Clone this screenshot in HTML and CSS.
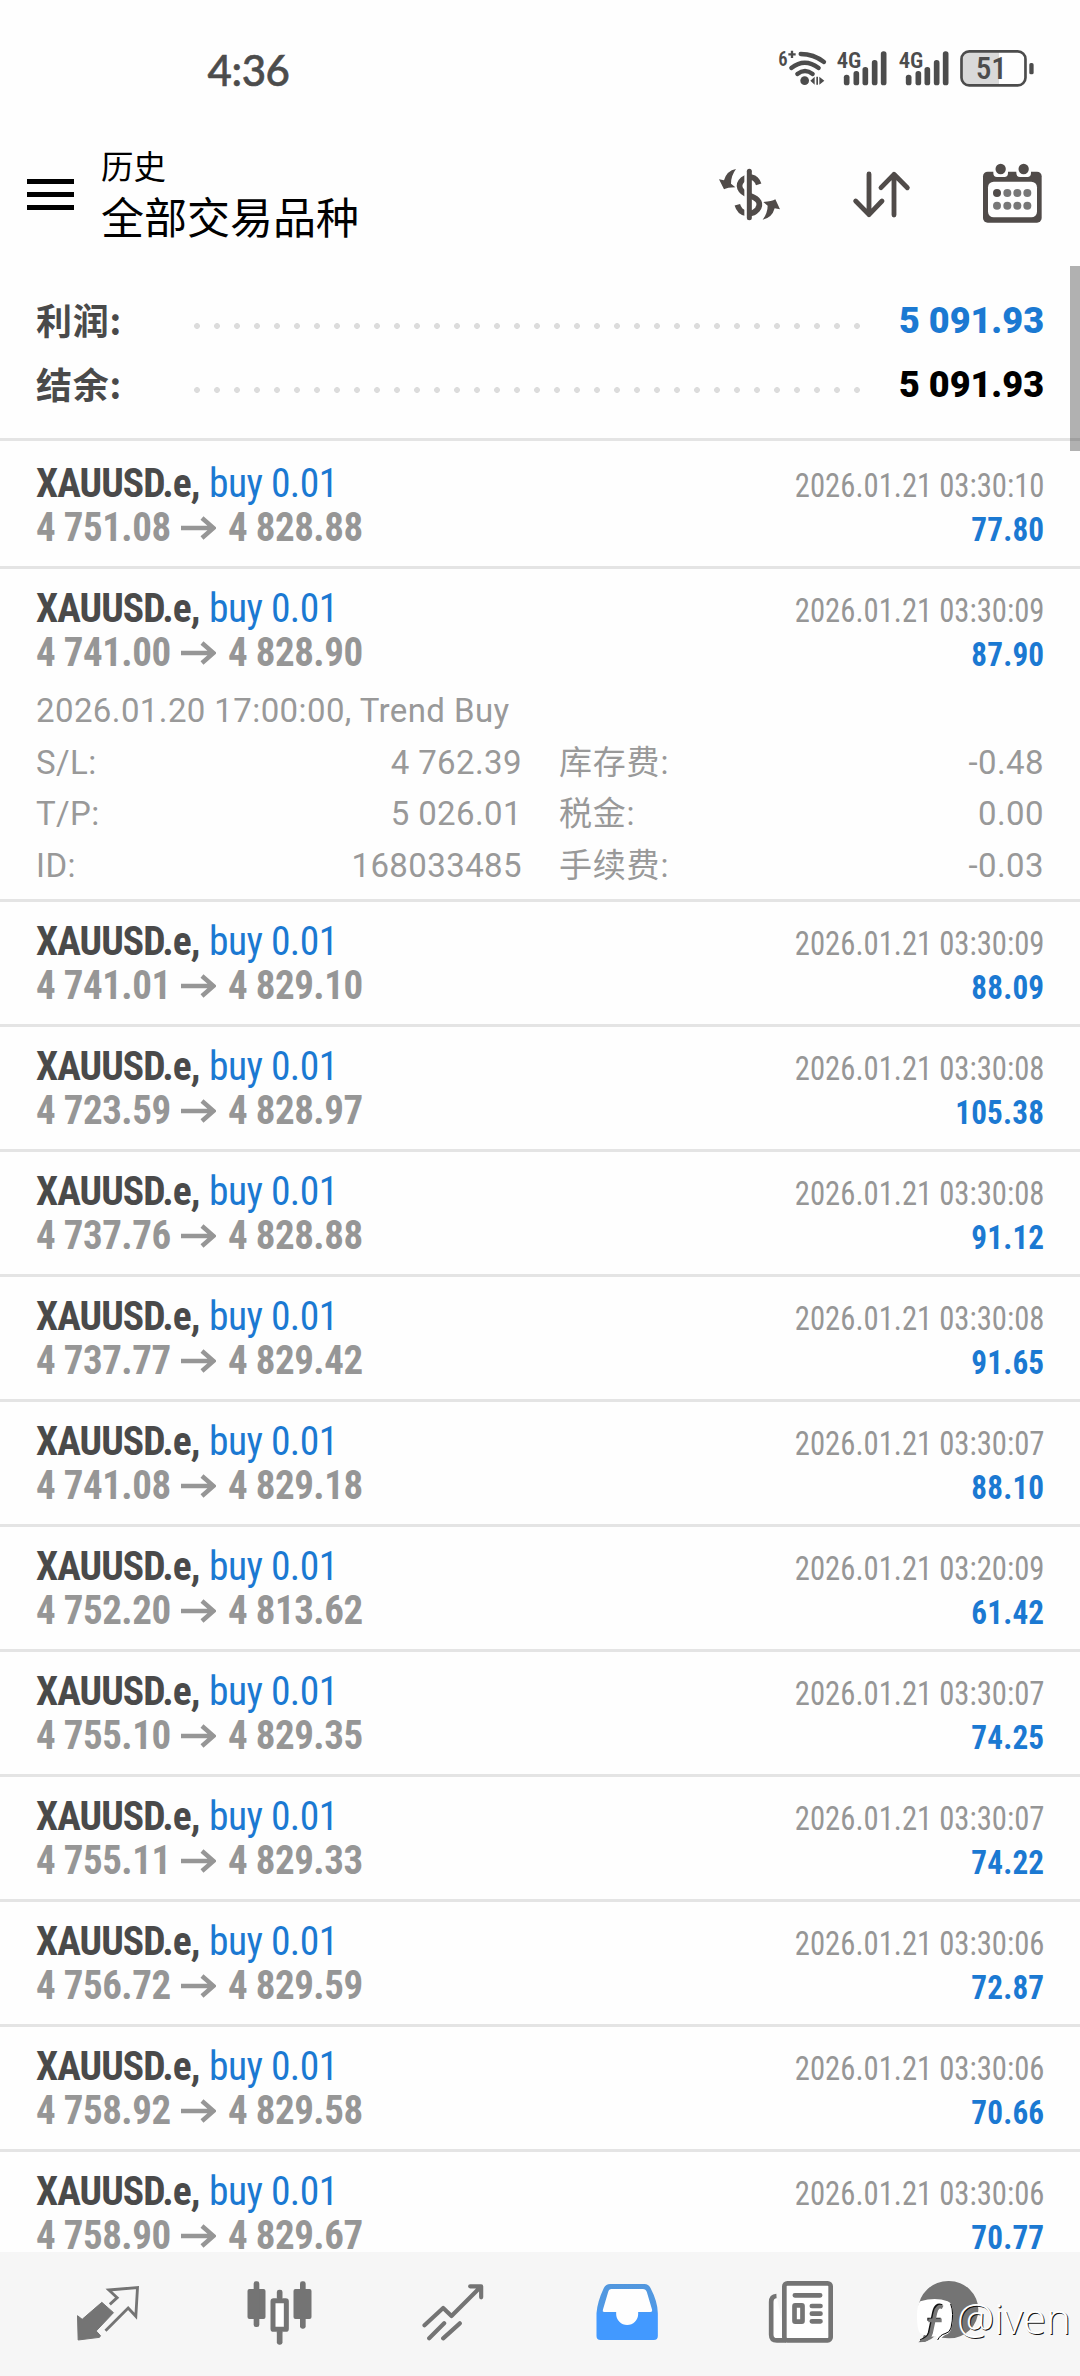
FILE: index.html
```html
<!DOCTYPE html>
<html lang="zh-CN">
<head>
<meta charset="utf-8">
<title>历史</title>
<link rel="stylesheet" href="styles.css">
</head>
<body>
<svg class="defs" width="0" height="0">
  <symbol id="arrow" viewBox="0 0 35 24"><path d="M0 12H32M21 2L32.500 12L21 22" fill="none" stroke="#969696" stroke-width="4.500"/></symbol>
</svg>
<div class="screen">
  <header class="status">
    <span class="clock">4:36</span>
    <div class="status-icons">
      <svg width="60" height="60" viewBox="10 0 180 180">
        <text x="23" y="79" font-size="62" font-weight="600" textLength="28" lengthAdjust="spacingAndGlyphs">6</text>
        <path d="M53 43H75M64 32V54" stroke="#4c4c4c" stroke-width="7"/>
        <g fill="none" stroke="#4c4c4c" stroke-width="13" stroke-linecap="round"><path d="M90 42Q129 42 160 66"/><path d="M62 84Q102 52 144 84"/><path d="M80 102Q103 84 126 102"/></g>
        <circle cx="102" cy="122" r="13"/><path d="M119 122L132 110V134ZM137 110H142V134H137ZM146 110L161 122L146 134Z"/>
      </svg>
      <svg width="61.670" height="60" viewBox="190 0 185 180">
        <text x="198" y="83" font-size="64" font-weight="600" textLength="74" lengthAdjust="spacingAndGlyphs">4G</text>
        <rect x="219.500" y="104" width="17" height="32" rx="8"/><rect x="248.500" y="93" width="17" height="43" rx="8"/><rect x="275.500" y="81" width="17" height="55" rx="8"/><rect x="303.500" y="60" width="17" height="76" rx="8"/><rect x="330.500" y="34" width="17" height="102" rx="8"/>
      </svg>
      <svg width="61.670" height="60" viewBox="190 0 185 180">
        <text x="198" y="83" font-size="64" font-weight="600" textLength="74" lengthAdjust="spacingAndGlyphs">4G</text>
        <rect x="219.500" y="104" width="17" height="32" rx="8"/><rect x="248.500" y="93" width="17" height="43" rx="8"/><rect x="275.500" y="81" width="17" height="55" rx="8"/><rect x="303.500" y="60" width="17" height="76" rx="8"/><rect x="330.500" y="34" width="17" height="102" rx="8"/>
      </svg>
      <svg width="83.300" height="60" viewBox="560 0 250 180">
        <path d="M596 34H686V135H596Q575 135 575 114V55Q575 34 596 34Z" fill="#d9d9d9"/>
        <rect x="573.500" y="34" width="192" height="102" rx="23" fill="none" stroke="#4c4c4c" stroke-width="8"/>
        <text x="616" y="118" font-size="92" font-weight="500" textLength="94" lengthAdjust="spacingAndGlyphs">51</text>
        <rect x="777" y="69" width="13" height="34" rx="5"/>
      </svg>
    </div>
  </header>
  <div class="toolbar">
    <div class="menu"><i></i><i></i><i></i></div>
    <div class="titles"><span class="sub">历史</span><h1>全部交易品种</h1></div>
    <div class="tools">
      <svg width="68" height="80" viewBox="18 0 204 240">
        <path d="M146 88C138 62 112 62 99 73C80 90 88 111 118 121C150 132 154 148 142 164C124 184 90 178 82 149" fill="none" stroke="#504b49" stroke-width="17"/>
        <path d="M107 40V200" stroke="#fdfdfd" stroke-width="8"/>
        <path d="M118 49V188" stroke="#504b49" stroke-width="15" stroke-linecap="round"/>
        <path d="M78 42Q50 47 42 76L27 73L42 103Q52 97 76 97L63 86Q63 62 78 42ZM158 194Q186 189 194 160L210 163L196 133Q186 139 160 141L173 152Q173 174 158 194Z"/>
      </svg>
      <svg width="64" height="80" viewBox="420 0 192 240"><path d="M477 57V179M437 138L477 179L516 138M552 180V58M513 98L552 58L592 98" fill="none" stroke="#504b49" stroke-width="14.500" stroke-linecap="round" stroke-linejoin="round"/></svg>
      <svg width="64" height="80" viewBox="810 0 192 240">
        <rect x="819" y="50" width="176" height="153" rx="14"/><rect x="834" y="80" width="147" height="107" rx="17" fill="#fefefe"/>
        <path d="M850 42V54Q850 66 861 66H883Q894 66 894 54V42ZM919 42V54Q919 66 930 66H952Q963 66 963 54V42Z" fill="#fefefe"/>
        <circle cx="872" cy="42" r="15.500"/><circle cx="941" cy="42" r="15.500"/><circle cx="861" cy="114" r="12"/>
        <g fill="#777"><circle cx="892" cy="114" r="12"/><circle cx="922" cy="114" r="12"/><circle cx="952" cy="114" r="12"/><circle cx="861" cy="152" r="12"/><circle cx="892" cy="152" r="12"/><circle cx="922" cy="152" r="12"/><circle cx="952" cy="152" r="12"/></g>
      </svg>
    </div>
  </div>
  <main class="list">
    <div class="scroll"></div>
    <section class="summary">
      <div class="sum"><span class="key">利润:</span><span class="dots"></span><b class="blue">5 091.93</b></div>
      <div class="sum"><span class="key">结余:</span><span class="dots"></span><b>5 091.93</b></div>
    </section>
    <article class="deal first"><div class="line"><b class="sym">XAUUSD.e,</b><span class="side">buy 0.01</span><time>2026.01.21 03:30:10</time></div><div class="line"><b class="price">4 751.08</b><svg class="to"><use href="#arrow"/></svg><b class="price">4 828.88</b><b class="profit">77.80</b></div></article>
    <article class="deal open"><div class="line"><b class="sym">XAUUSD.e,</b><span class="side">buy 0.01</span><time>2026.01.21 03:30:09</time></div><div class="line"><b class="price">4 741.00</b><svg class="to"><use href="#arrow"/></svg><b class="price">4 828.90</b><b class="profit">87.90</b></div>
      <div class="details">
        <p class="note">2026.01.20 17:00:00, Trend Buy</p>
        <div class="grid">
          <span>S/L:</span><span class="num">4 762.39</span><span class="cjk">库存费:</span><span class="num">-0.48</span>
          <span>T/P:</span><span class="num">5 026.01</span><span class="cjk">税金:</span><span class="num">0.00</span>
          <span>ID:</span><span class="num">168033485</span><span class="cjk">手续费:</span><span class="num">-0.03</span>
        </div>
      </div>
    </article>
    <article class="deal"><div class="line"><b class="sym">XAUUSD.e,</b><span class="side">buy 0.01</span><time>2026.01.21 03:30:09</time></div><div class="line"><b class="price">4 741.01</b><svg class="to"><use href="#arrow"/></svg><b class="price">4 829.10</b><b class="profit">88.09</b></div></article>
    <article class="deal"><div class="line"><b class="sym">XAUUSD.e,</b><span class="side">buy 0.01</span><time>2026.01.21 03:30:08</time></div><div class="line"><b class="price">4 723.59</b><svg class="to"><use href="#arrow"/></svg><b class="price">4 828.97</b><b class="profit">105.38</b></div></article>
    <article class="deal"><div class="line"><b class="sym">XAUUSD.e,</b><span class="side">buy 0.01</span><time>2026.01.21 03:30:08</time></div><div class="line"><b class="price">4 737.76</b><svg class="to"><use href="#arrow"/></svg><b class="price">4 828.88</b><b class="profit">91.12</b></div></article>
    <article class="deal"><div class="line"><b class="sym">XAUUSD.e,</b><span class="side">buy 0.01</span><time>2026.01.21 03:30:08</time></div><div class="line"><b class="price">4 737.77</b><svg class="to"><use href="#arrow"/></svg><b class="price">4 829.42</b><b class="profit">91.65</b></div></article>
    <article class="deal"><div class="line"><b class="sym">XAUUSD.e,</b><span class="side">buy 0.01</span><time>2026.01.21 03:30:07</time></div><div class="line"><b class="price">4 741.08</b><svg class="to"><use href="#arrow"/></svg><b class="price">4 829.18</b><b class="profit">88.10</b></div></article>
    <article class="deal"><div class="line"><b class="sym">XAUUSD.e,</b><span class="side">buy 0.01</span><time>2026.01.21 03:20:09</time></div><div class="line"><b class="price">4 752.20</b><svg class="to"><use href="#arrow"/></svg><b class="price">4 813.62</b><b class="profit">61.42</b></div></article>
    <article class="deal"><div class="line"><b class="sym">XAUUSD.e,</b><span class="side">buy 0.01</span><time>2026.01.21 03:30:07</time></div><div class="line"><b class="price">4 755.10</b><svg class="to"><use href="#arrow"/></svg><b class="price">4 829.35</b><b class="profit">74.25</b></div></article>
    <article class="deal"><div class="line"><b class="sym">XAUUSD.e,</b><span class="side">buy 0.01</span><time>2026.01.21 03:30:07</time></div><div class="line"><b class="price">4 755.11</b><svg class="to"><use href="#arrow"/></svg><b class="price">4 829.33</b><b class="profit">74.22</b></div></article>
    <article class="deal"><div class="line"><b class="sym">XAUUSD.e,</b><span class="side">buy 0.01</span><time>2026.01.21 03:30:06</time></div><div class="line"><b class="price">4 756.72</b><svg class="to"><use href="#arrow"/></svg><b class="price">4 829.59</b><b class="profit">72.87</b></div></article>
    <article class="deal"><div class="line"><b class="sym">XAUUSD.e,</b><span class="side">buy 0.01</span><time>2026.01.21 03:30:06</time></div><div class="line"><b class="price">4 758.92</b><svg class="to"><use href="#arrow"/></svg><b class="price">4 829.58</b><b class="profit">70.66</b></div></article>
    <article class="deal"><div class="line"><b class="sym">XAUUSD.e,</b><span class="side">buy 0.01</span><time>2026.01.21 03:30:06</time></div><div class="line"><b class="price">4 758.90</b><svg class="to"><use href="#arrow"/></svg><b class="price">4 829.67</b><b class="profit">70.77</b></div></article>
  </main>
  <nav class="tabs">
    <svg viewBox="32.500 0 210 270"><path d="M52 137L66 148L125 97L160 128L108 183L121 197L118 202L54 210Z" stroke="#747474" stroke-width="3" stroke-linejoin="round"/><path d="M149 103L171 83L146 60L232 53L227 139L204 114L136 182" fill="none" stroke="#747474" stroke-width="8.500"/></svg>
    <svg viewBox="553.500 0 210 270"><rect x="564" y="57" width="54" height="90" rx="6"/><rect x="582.500" y="34" width="17" height="137" rx="7"/><rect x="702" y="57" width="54" height="90" rx="6"/><rect x="721.500" y="34" width="17" height="142" rx="7"/><rect x="652" y="59" width="17" height="30" rx="7"/><rect x="652" y="180" width="17" height="44" rx="7"/><rect x="640.500" y="92" width="40" height="86" rx="2" fill="#fefefe" stroke="#747474" stroke-width="15"/></svg>
    <svg viewBox="1074.500 0 210 270"><path d="M1094 166L1150 114L1175 138L1262 51M1231 49H1264V82M1108 205L1153 160M1150 205L1200 160" fill="none" stroke="#747474" stroke-width="12.500" stroke-linecap="round" stroke-linejoin="round"/></svg>
    <svg viewBox="35.500 0 210 270">
      <defs><linearGradient id="tray" x1="0" y1="0" x2="0" y2="1"><stop offset="0" stop-color="#5297de"/><stop offset=".4" stop-color="#5099e4"/><stop offset=".55" stop-color="#4299ff"/></linearGradient></defs>
      <path d="M90 42H193Q205 42 211 54Q233 96 233 130V198Q233 210 221 210H61Q49 210 49 198V130Q51 96 71 54Q77 42 90 42Z" fill="url(#tray)"/><path d="M94 57H188Q197 57 200 66L216 120Q217 126 211 126H174V132A33 33 0 0 1 108 132V126H72Q66 126 68 120L84 66Q86 57 94 57Z" fill="#fefefe"/></svg>
    <svg viewBox="556.500 0 210 270"><g fill="none" stroke="#747474" stroke-width="14" stroke-linecap="round"><path d="M591 78Q575 79 575 96V194Q575 211 592 211H620" fill="#fefefe" stroke-linecap="butt"/><rect x="614.500" y="40" width="139" height="171" rx="9" fill="#fefefe"/><path d="M646 76H722M697 108H723M697 131H723M697 154H723"/><rect x="645" y="106" width="24" height="49" rx="2"/></g></svg>
    <svg class="chat" viewBox="1002 0 210 270"><path d="M1107 33A88 86 0 0 1 1107 205Q1085 205 1064 199Q1045 217 1015 217Q1032 205 1033 188Q1015 160 1015 119A90 86 0 0 1 1107 33Z"/></svg>
    <div class="mark">
      <svg width="36" height="44" viewBox="0 0 108 132"><path d="M10 10Q55 -4 92 10Q108 16 108 50Q108 98 92 108Q80 110 64 130Q60 120 56 116Q26 116 8 104Q0 92 0 56Q0 18 10 10Z" fill="#fff"/><path d="M75 23Q56 15 50 42L37 104Q32 122 10 128M31 64H71" fill="none" stroke="#111" stroke-width="9"/><path d="M77 28Q61 20 55 45L42 105Q37 124 10 131M34 67H74" fill="none" stroke="#777" stroke-width="11"/><path d="M101 18Q112 45 102 90Q98 104 84 107Q70 110 62 126" fill="none" stroke="#000" stroke-width="3"/></svg>
      <span>@iven</span>
    </div>
  </nav>
</div>
</body>
</html>
```

FILE: styles.css
```css
* { box-sizing: border-box; margin: 0; padding: 0; }
body { background: #fefefe; font-family: Roboto, "Noto Sans CJK SC", sans-serif; color: #000; }
svg { display: block; flex: none; }
.defs { position: absolute; }
.screen { width: 1080px; height: 2376px; display: flex; flex-direction: column; overflow: hidden; background: #fefefe; }

.status { height: 155px; padding: 40px 39.5px 0 207.5px; display: flex; justify-content: space-between; align-items: flex-start; flex: none; }
.clock { font: 500 42px/60px Lato, sans-serif; color: #4c4c4c; -webkit-text-stroke: .6px #4c4c4c; letter-spacing: -.4px; }
.status-icons { display: flex; fill: #4c4c4c; font-family: "Roboto Condensed", Roboto, sans-serif; }

.toolbar { height: 111px; padding: 0 36px 0 27px; display: flex; align-items: flex-start; flex: none; }
.menu { width: 47px; padding-top: 24px; display: flex; flex-direction: column; gap: 8px; }
.menu i { height: 5px; background: #000; }
.titles { margin: -2px 0 0 27px; flex: 1; font-family: "Noto Sans CJK SC", sans-serif; }
.sub { display: block; font-size: 32.5px; line-height: 24px; }
h1 { font-size: 43px; font-weight: 400; line-height: 50px; margin-top: 13px; }
.tools { display: flex; gap: 66px; fill: #504b49; }

.list { flex: 1; min-height: 0; overflow: hidden; position: relative; }
.scroll { position: absolute; right: 0; top: 0; width: 10px; height: 185px; background: rgba(0, 0, 0, .3); }
.summary { height: 175px; padding: 23px 36px 0; border-bottom: 3px solid #e4e4e4; }
.sum { height: 64px; display: flex; align-items: center; font-size: 36px; font-weight: 700; }
.key { width: 158px; padding-bottom: 4px; color: #4a4a4a; letter-spacing: .8px; font-family: "Noto Sans CJK SC", sans-serif; }
.dots { width: 680px; height: 6px; margin-top: 10px; background: radial-gradient(circle at 3px 3px, #dcdcdc 2.6px, transparent 3.2px) 0 0 / 20px 6px repeat-x; }
.sum b { margin-left: auto; }
.blue { color: #1b79d2; }

.deal { padding: 17px 36px; border-bottom: 3px solid #e4e4e4; font-family: "Roboto Condensed", sans-serif; font-size: 41px; color: #969696; }
.first { padding-top: 20px; }
.line { height: 44px; line-height: 44px; display: flex; align-items: baseline; white-space: nowrap; }
.sym, .side, .price { flex: none; transform-origin: left; }
.sym { width: 173px; color: #4a4a4a; letter-spacing: -1px; transform: scaleX(.965); }
.side { color: #1b79d2; letter-spacing: -.6px; transform: scaleX(.965); }
.price { width: 132px; letter-spacing: -.5px; transform: scaleX(.95); }
.to { width: 35px; height: 24px; margin: 0 12px 0 13px; align-self: center; position: relative; top: 1px; }
time, .profit { margin-left: auto; font-size: 33px; transform-origin: right; }
time { transform: scaleX(.93); }
.profit { color: #1b79d2; letter-spacing: .2px; transform: scaleX(.945); }
.open { padding-bottom: 0; height: 333px; }
.details { font: 400 33px/51.5px Roboto, "Noto Sans CJK SC", sans-serif; color: #999; padding-top: 11px; letter-spacing: .4px; }
.grid { display: grid; grid-template-columns: 100px 386px 200px 1fr; }
.grid span { height: 51.5px; white-space: nowrap; }
.grid .num { text-align: right; }
.grid .cjk { padding-left: 37px; letter-spacing: .8px; }

.tabs { height: 124px; padding: 18px 19px 0; background: #f6f6f6; display: grid; grid-template-columns: repeat(6, 1fr); justify-items: center; align-items: start; flex: none; fill: #747474; position: relative; }
.tabs > svg { width: 70px; height: 90px; }
.tabs .chat { margin-right: 50px; }
.mark { position: absolute; left: 917px; top: 46px; display: flex; gap: 4px; }
.mark span { font: 300 42px/40px "Open Sans", sans-serif; color: #fff; text-shadow: 1px 1px 0 #111; }
```
